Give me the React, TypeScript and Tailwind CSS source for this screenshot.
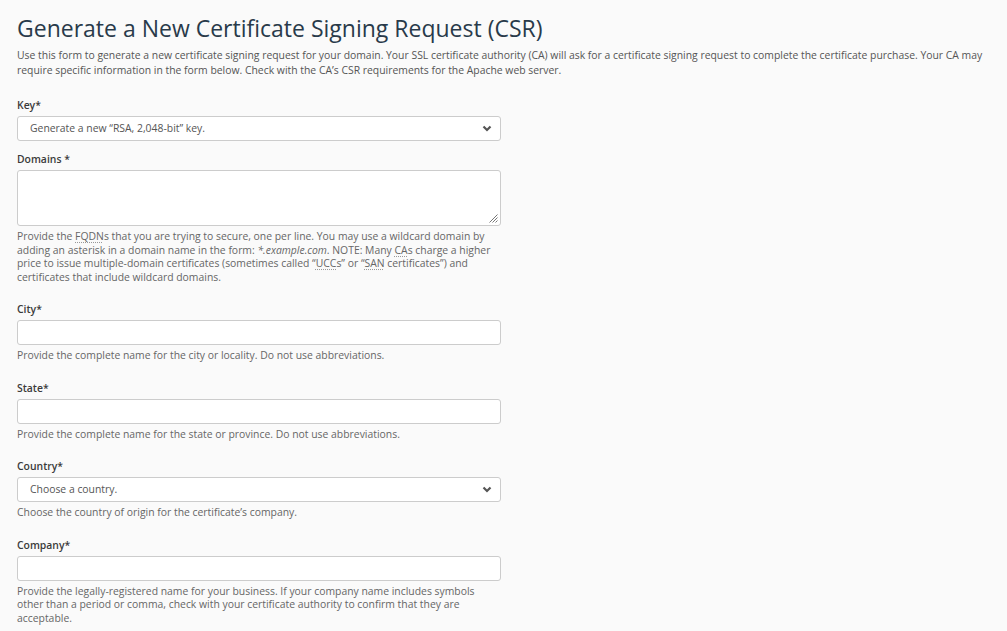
function Abbr({ children }: { children: string }) {
  return (
    <abbr className="underline decoration-dotted decoration-[#999] underline-offset-2" title={children}>
      {children}
    </abbr>
  );
}

function Label({ children }: { children: string }) {
  return <div className="text-[10.4px] font-semibold text-[#3a3a3a] leading-[14px] mb-[4px]">{children}</div>;
}

function Help({ children }: { children: React.ReactNode }) {
  return <div className="text-[10.4px] text-[#666] leading-[13.5px] mt-[4px]">{children}</div>;
}

function SelectBox({ value }: { value: string }) {
  return (
    <div className="h-[25px] w-[484px] bg-white border border-[#ccc] rounded-[3px] flex items-center justify-between pl-[12px] pr-[8px] text-[10.4px] text-[#555]">
      <span>{value}</span>
      <svg width="10" height="7" viewBox="0 0 10 7">
        <path d="M1.5 1.5 L5 5 L8.5 1.5" fill="none" stroke="#555" strokeWidth="2.2" />
      </svg>
    </div>
  );
}

function TextBox() {
  return <div className="h-[25px] w-[484px] bg-white border border-[#ccc] rounded-[3px]" />;
}

export default function App() {
  return (
    <div className="min-h-screen bg-[#fafafa] pl-[17px] pr-[8px] pt-[12px]" style={{ fontFamily: '"Open Sans", sans-serif' }}>
      <h1 className="text-[23px] leading-[33px] text-[#293a4a] font-normal">
        Generate a New Certificate Signing Request (CSR)
      </h1>
      <p className="text-[10.4px] leading-[15px] text-[#555] mt-[3px]">
        Use this form to generate a new certificate signing request for your domain. Your SSL certificate authority (CA)
        will ask for a certificate signing request to complete the certificate purchase. Your CA may require specific
        information in the form below. Check with the CA’s CSR requirements for the Apache web server.
      </p>

      <div className="mt-[20px] w-[484px]">
        <Label>Key*</Label>
        <SelectBox value="Generate a new “RSA, 2,048-bit” key." />

        <div className="mt-[11px]">
          <Label>Domains *</Label>
          <div className="relative h-[56px] w-[484px] bg-white border border-[#ccc] rounded-[3px]">
            <svg className="absolute right-[2px] bottom-[2px]" width="9" height="9" viewBox="0 0 9 9">
              <path d="M8.5 0.5 L0.5 8.5 M8.5 3.5 L3.5 8.5 M8.5 6.5 L6.5 8.5" stroke="#777" strokeWidth="1" />
            </svg>
          </div>
          <Help>
            Provide the <Abbr>FQDN</Abbr>s that you are trying to secure, one per line. You may use a wildcard domain by
            adding an asterisk in a domain name in the form: <i>*.example.com</i>. NOTE: Many <Abbr>CA</Abbr>s charge a
            higher price to issue multiple-domain certificates (sometimes called “<Abbr>UCC</Abbr>s” or “<Abbr>SAN</Abbr>{" "}
            certificates”) and certificates that include wildcard domains.
          </Help>
        </div>

        <div className="mt-[18px]">
          <Label>City*</Label>
          <TextBox />
          <Help>Provide the complete name for the city or locality. Do not use abbreviations.</Help>
        </div>

        <div className="mt-[18px]">
          <Label>State*</Label>
          <TextBox />
          <Help>Provide the complete name for the state or province. Do not use abbreviations.</Help>
        </div>

        <div className="mt-[18px]">
          <Label>Country*</Label>
          <SelectBox value="Choose a country." />
          <Help>Choose the country of origin for the certificate’s company.</Help>
        </div>

        <div className="mt-[18px]">
          <Label>Company*</Label>
          <TextBox />
          <Help>
            Provide the legally-registered name for your business. If your company name includes symbols other than a
            period or comma, check with your certificate authority to confirm that they are acceptable.
          </Help>
        </div>
      </div>
    </div>
  );
}
